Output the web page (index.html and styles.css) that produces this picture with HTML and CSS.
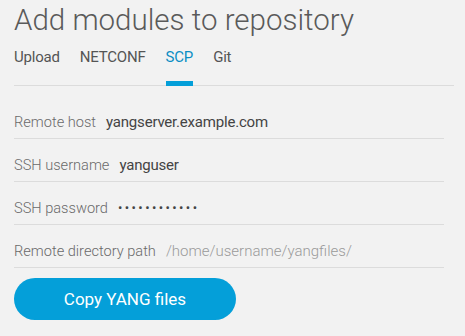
FILE: index.html
```html
<!DOCTYPE html>
<html lang="en">
<head>
    <meta charset="UTF-8">
    <meta name="viewport" content="width=device-width, initial-scale=1.0">
    <title>Add modules</title>
    <link rel="stylesheet" href="styles.css">
</head>
<body>
    <section class="panel">
        <h1 class="title">Add modules to repository</h1>
        <nav class="tabs">
            <a href="#" class="tab">Upload</a>
            <a href="#" class="tab">NETCONF</a>
            <a href="#" class="tab active">SCP</a>
            <a href="#" class="tab">Git</a>
        </nav>

        <div class="fields">
            <div class="row">
                <span class="label">Remote host</span>
                <span class="value">yangserver.example.com</span>
            </div>
            <div class="row">
                <span class="label">SSH username</span>
                <span class="value">yanguser</span>
            </div>
            <div class="row">
                <span class="label">SSH password</span>
                <span class="value dots">&#8226;&#8226;&#8226;&#8226;&#8226;&#8226;&#8226;&#8226;&#8226;&#8226;&#8226;&#8226;</span>
            </div>
            <div class="row">
                <span class="label">Remote directory path</span>
                <span class="value hint">/home/username/yangfiles/</span>
            </div>
        </div>

        <button class="copy">Copy YANG files</button>
    </section>
</body>
</html>
```

FILE: styles.css
```css
*{
    box-sizing: border-box;
}
body{
    margin: 0;
    padding: 0;
    background-color: #f2f2f2;
    font-family: Roboto, "Liberation Sans", sans-serif;
    color: #555;
}
.panel{
    padding: 2px 11px 0 14px;
}
.title{
    margin: 0;
    font-size: 29.5px;
    line-height: 36px;
    font-weight: 300;
    color: #5a5a5a;
}
.tabs{
    display: flex;
    gap: 20px;
    margin-top: 9px;
    border-bottom: 1px solid #dcdcdc;
}
.tab{
    font-size: 15px;
    line-height: 20px;
    color: #555;
    text-decoration: none;
    letter-spacing: -0.2px;
    padding-bottom: 14px;
    margin-bottom: -1px;
    border-bottom: 5px solid transparent;
}
.tab.active{
    color: #0b8ec4;
    border-bottom-color: #049fd9;
}
.fields{
    margin-top: 10px;
    width: 430px;
}
.row{
    display: flex;
    gap: 10px;
    height: 43px;
    padding-top: 16px;
    font-size: 15px;
    line-height: 20px;
    border-bottom: 1px solid #dcdcdc;
}
.label{
    color: #6a6a6a;
    font-weight: 300;
    font-size: 14.6px;
}
.value{
    color: #444;
    letter-spacing: -0.2px;
}
.dots{
    font-size: 13px;
    letter-spacing: 2.4px;
}
.hint{
    color: #9a9a9a;
    font-weight: 300;
    letter-spacing: 0;
}
.copy{
    margin-top: 10px;
    width: 222px;
    height: 42px;
    border: none;
    border-radius: 21px;
    background-color: #049fd9;
    color: #fff;
    font-family: Roboto, "Liberation Sans", sans-serif;
    font-size: 17px;
    cursor: pointer;
}
.copy:hover{
    opacity: .8;
}
```
